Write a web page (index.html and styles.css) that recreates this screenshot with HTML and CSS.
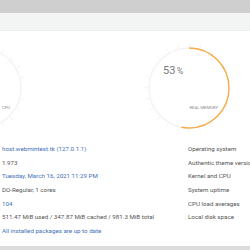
FILE: index.html
```html
<!DOCTYPE html>
<html lang="en">
<head>
  <meta charset="UTF-8">
  <title>System Information</title>
  <link rel="stylesheet" href="styles.css">
</head>
<body>
  <header class="topbar"></header>
  <div class="subbar"></div>
  <div class="gauges">
    <svg class="gauge" viewBox="0 0 100 100" width="100" height="100">
      <circle class="ticks" cx="50" cy="50" r="43"></circle>
      <circle class="track" cx="50" cy="50" r="40"></circle>
      <text class="label" x="79" y="71">CPU</text>
    </svg>
    <svg class="gauge" viewBox="0 0 100 100" width="100" height="100">
      <circle class="ticks" cx="50" cy="50" r="43"></circle>
      <circle class="track" cx="50" cy="50" r="40"></circle>
      <circle class="value" cx="50" cy="50" r="40" stroke-dasharray="133.2 251.4"></circle>
      <text class="percent" x="24" y="36">53<tspan class="unit" dx="1.5">%</tspan></text>
      <text class="label" x="79" y="71">REAL MEMORY</text>
    </svg>
  </div>
  <div class="info">
    <div class="val link">host.webmintest.tk (127.0.1.1)</div><div class="key">Operating system</div>
    <div class="val">1.973</div><div class="key">Authentic theme version</div>
    <div class="val link">Tuesday, March 16, 2021 11:29 PM</div><div class="key">Kernel and CPU</div>
    <div class="val">DO-Regular, 1 cores</div><div class="key">System uptime</div>
    <div class="val link">104</div><div class="key">CPU load averages</div>
    <div class="val">511.47 MiB used / 347.87 MiB cached / 981.3 MiB total</div><div class="key">Local disk space</div>
    <div class="val link">All installed packages are up to date</div><div class="key"></div>
  </div>
  <footer class="bottombar"></footer>
</body>
</html>
```

FILE: styles.css
```css
* {
  margin: 0;
  padding: 0;
  box-sizing: border-box;
}
body {
  width: 250px;
  height: 250px;
  overflow: hidden;
  background-color: #fff;
  font-family: Roboto, 'Liberation Sans', sans-serif;
  display: flex;
  flex-direction: column;
}
.topbar {
  height: 13px;
  background-color: #cecfce;
  flex: none;
}
.subbar {
  height: 18px;
  background-color: #f3f4f4;
  border-bottom: 1px solid #eeefef;
  flex: none;
}
/* gauges */
.gauges {
  display: flex;
  gap: 108px;
  margin-left: -69px;
  padding-top: 7px;
  flex: none;
}
.gauge {
  display: block;
  flex: none;
  overflow: visible;
}
.ticks {
  fill: none;
  stroke: #f0f0f0;
  stroke-width: 4;
  stroke-dasharray: 0.7 10.557;
  stroke-dashoffset: 0.35;
}
.track {
  fill: #fff;
  stroke: #f3f3f3;
  stroke-width: 1.4;
}
.value {
  fill: none;
  stroke: #f5ad4a;
  stroke-width: 1.4;
  transform: rotate(-90deg);
  transform-origin: 50px 50px;
}
.percent {
  font-size: 11px;
  fill: #7a7a7a;
}
.unit {
  font-size: 8.5px;
}
.label {
  font-size: 4.2px;
  fill: #8a8a8a;
  text-anchor: end;
  text-transform: uppercase;
}
/* table */
.info {
  display: grid;
  grid-template-columns: 186px 1fr;
  grid-auto-rows: 13.7px;
  align-items: center;
  padding: 4px 0 0 2px;
  font-size: 6.2px;
  white-space: nowrap;
  flex: none;
}
.info div {
  overflow: hidden;
}
.val {
  color: #555;
}
.link {
  color: #3f70b8;
}
.key {
  color: #555;
}
.bottombar {
  margin-top: auto;
  height: 4px;
  background-color: #dcdcdc;
  flex: none;
}
```
